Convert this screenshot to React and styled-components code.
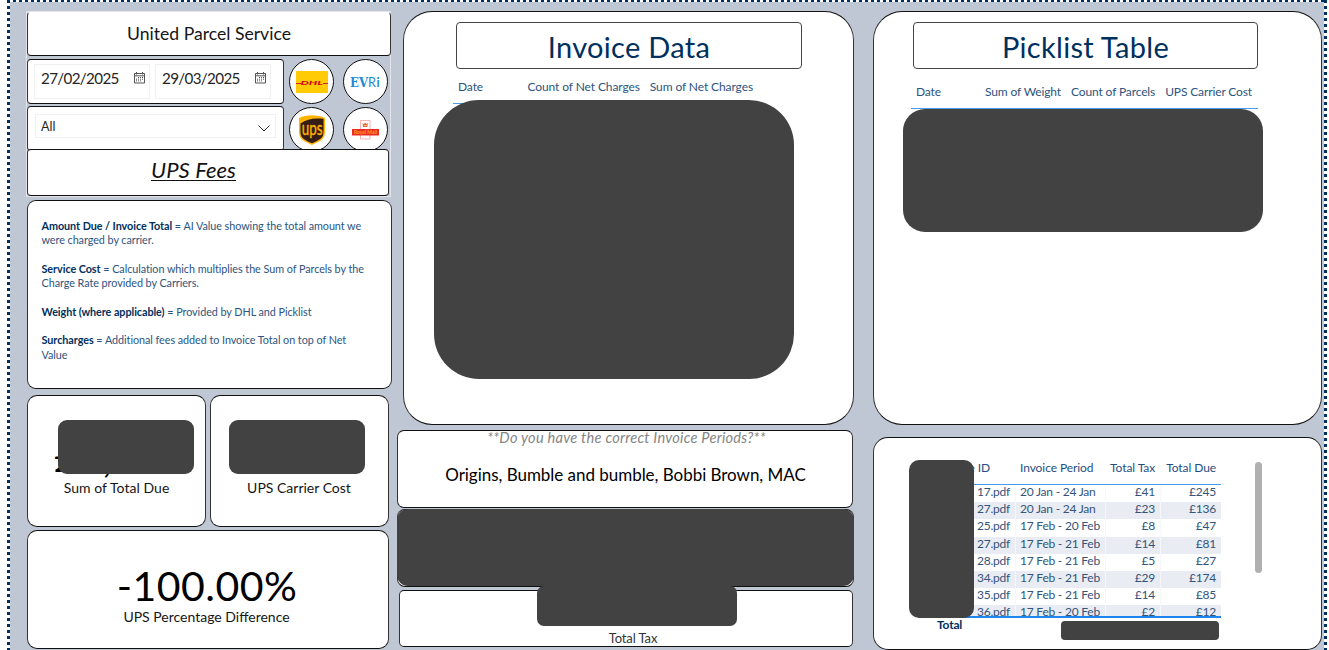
import React from "react";
import styled, { createGlobalStyle } from "styled-components";

const NAVY = "#00305e";
const COVER = "#424242";

const GlobalStyle = createGlobalStyle`
  *, *::before, *::after { box-sizing: border-box; }
  html, body { margin: 0; background: #fff; }
  body { width: 1329px; height: 650px; overflow: hidden; font-family: Lato, "Open Sans", sans-serif; color: #111; }
`;

const Board = styled.main`
  width: 1320px;
  height: 650px;
  margin-left: 7px;
  padding: 11px 0 0 19px;
  overflow: hidden;
  display: grid;
  grid-template-columns: 366px 457px 450px;
  column-gap: 5px;
  background:
    repeating-linear-gradient(180deg, ${NAVY} 0 3px, #fff 3px 6px) 0 0 / 3px 100% no-repeat,
    repeating-linear-gradient(180deg, ${NAVY} 0 3px, #fff 3px 6px) 100% 0 / 3px 100% no-repeat,
    repeating-linear-gradient(90deg, ${NAVY} 0 3px, #fff 3px 6px) 0 0 / 100% 2px no-repeat,
    #bfc6d4;
`;

const Column = styled.div`
  display: flex;
  flex-direction: column;
  align-items: flex-start;
  min-width: 0;
  margin-left: ${(p) => p.$shift || 0}px;
`;

const Card = styled.section`
  position: relative;
  flex: none;
  width: ${(p) => p.$w}px;
  height: ${(p) => p.$h}px;
  margin: ${(p) => p.$margin || "0"};
  padding-top: ${(p) => p.$top || 0}px;
  border: 1px solid #111;
  border-left-color: #333;
  border-right-color: #333;
  border-radius: ${(p) => p.$r}px;
  background: #fff;
`;

const Text = styled.div`
  font-size: ${(p) => p.$size}px;
  line-height: ${(p) => p.$lh}px;
  font-weight: ${(p) => p.$weight || 400};
  letter-spacing: ${(p) => p.$ls || 0}px;
  color: ${(p) => p.$color || "#151515"};
  padding-left: ${(p) => p.$indent || 0}px;
  padding-right: ${(p) => p.$outdent || 0}px;
  margin-top: ${(p) => p.$mt || 0}px;
  font-style: ${(p) => (p.$italic ? "italic" : "normal")};
  text-align: center;
  white-space: nowrap;
`;

const Cover = styled.div`
  position: absolute;
  left: ${(p) => p.$x}px;
  top: ${(p) => p.$y}px;
  width: ${(p) => p.$w}px;
  height: ${(p) => p.$h}px;
  border-radius: ${(p) => p.$r}px;
  background: ${COVER};
`;

/* ---- filters ---- */
const FilterFrame = styled.div`
  width: 365px;
  height: 186px;
  border: 1px solid #e3e5ea;
  display: flex;
  flex-direction: column;
`;

const TitleCard = styled(Card)`
  border-top-color: #fff;
`;

const FilterRow = styled.div`
  height: 94px;
  padding-top: 3px;
  display: flex;
`;

const Slicers = styled.div`
  display: flex;
  flex-direction: column;
  gap: 2px;
  width: 257px;
`;

const DateCard = styled(Card)`
  display: flex;
  gap: 5px;
  padding: 4px 0 0 6px;
`;

const DateField = styled.div`
  width: 116px;
  height: 35px;
  border: 1px solid #f0f0f0;
  display: flex;
  align-items: flex-start;
  justify-content: space-between;
  padding: 0 4px 0 6px;
  font-size: 15.2px;
  line-height: 27px;
  letter-spacing: -0.65px;
  color: #252423;

  svg { margin-top: 7px; }
`;

const Dropdown = styled.div`
  width: 241px;
  height: 24px;
  margin-left: 7px;
  border: 1px solid #f0f0f0;
  display: flex;
  justify-content: space-between;
  padding: 0 5px 0 5px;
  font-size: 12.5px;
  line-height: 23px;
  color: #252423;

  svg { margin-top: 10px; }
`;

const Carriers = styled.div`
  display: grid;
  grid-template-columns: 44px 44px;
  grid-template-rows: 45px 45px;
  gap: 3px 10px;
  padding-left: 5px;
`;

const CarrierButton = styled.div`
  width: 45px;
  height: 45px;
  border: 1px solid #111;
  border-radius: 50%;
  background: #fff;
  display: flex;
  align-items: center;
  justify-content: center;

  svg { overflow: visible; }
`;

const FeesHeading = styled.div`
  font-size: 22px;
  line-height: 24px;
  margin-top: 8px;
  padding-right: 29px;
  text-align: center;
  font-style: italic;
  letter-spacing: 0.1px;
  text-decoration: underline;
  text-decoration-thickness: 1px;
  text-underline-offset: 2px;
`;

/* ---- notes ---- */
const Notes = styled.div`
  padding: 0 0 0 13.5px;
  color: #2c5480;
  font-size: 10.8px;
  line-height: 14.3px;
  letter-spacing: -0.05px;
  white-space: nowrap;

  p { margin: 0 0 14.4px; }
  b { color: ${NAVY}; font-weight: 700; }
`;

const KpiRow = styled.div`
  display: flex;
  gap: 4px;
  margin: 6px 0 3px 1px;
`;

const HiddenAmount = styled.div`
  display: flex;
  gap: 24px;
  padding-left: 26px;
  height: 50px;
  font-size: 42px;
  line-height: 56px;
  color: #000;
`;

/* ---- tables ---- */
const TitleBox = styled.h2`
  margin: 10px 0 0 ${(p) => p.$x}px;
  width: ${(p) => p.$w}px;
  height: 47px;
  border: 1px solid #444;
  border-radius: 4px;
  text-align: center;
  font-weight: 400;
  font-size: 29px;
  line-height: 48px;
  letter-spacing: 0.3px;
  color: ${NAVY};
`;

const HeadRow = styled.div`
  display: flex;
  width: ${(p) => p.$w}px;
  height: 25px;
  margin: ${(p) => p.$margin};
  padding: 0 ${(p) => p.$end}px 0 5px;
  border-bottom: 1px solid #4b9be8;
  font-size: 12px;
  line-height: 16px;
  color: #2c5480;
  white-space: nowrap;
  letter-spacing: ${(p) => p.$ls || 0}px;

  span:first-child { margin-right: auto; }
  span + span { margin-left: 10px; }
`;

const InvoiceTable = styled.div`
  width: 290px;
  margin-left: 57px;
  color: #34547a;
  font-size: 12px;
`;

const Row = styled.div`
  display: grid;
  grid-template-columns: 84px 90px 55px 61px;
  height: 17.2px;
  line-height: 14px;
  letter-spacing: -0.22px;
  background: ${(p) => (p.$alt ? "#e9ecf2" : "#fff")};

  span { padding: 0 5px; white-space: nowrap; text-align: right; }
  span:nth-child(2) { text-align: left; }
  span + span { border-left: 1px solid #f6f7fa; padding-left: 4px; }
`;

const HeaderRow = styled(Row)`
  height: 27px;
  line-height: 20px;
  letter-spacing: -0.08px;
  color: #1f4e82;
  border-bottom: 1px solid #4b9be8;
  span + span { border-color: transparent; }
  span:first-child { padding-right: 25px; }
`;

const RowsClip = styled.div`
  height: 133px;
  overflow: hidden;
  border-bottom: 2px solid #1c86ee;
`;

const TotalRow = styled.div`
  padding-left: 6px;
  line-height: 14px;
  font-weight: 700;
  letter-spacing: -0.2px;
  color: ${NAVY};
`;

const ScrollThumb = styled.div`
  position: absolute;
  left: 381px;
  top: 24px;
  width: 7px;
  height: 111px;
  border-radius: 4px;
  background: #b0b0b0;
`;

const CalendarIcon = () => (
  <svg width="11" height="12" viewBox="0 0 11 12" fill="none" stroke="#555" strokeWidth="1">
    <path d="M.5 1.5h10v9.5H.5zM.5 3.8h10M2.5 0v2.5M8.5 0v2.5" />
    <path d="M4 5.5h5.5M2 7.2h7.5M2 8.9h5.5" strokeDasharray="1 1" />
  </svg>
);

const Chevron = () => (
  <svg width="12" height="7" viewBox="0 0 12 7" fill="none" stroke="#333" strokeWidth="1">
    <path d="M.5.5 6 6 11.5.5" />
  </svg>
);

const DhlLogo = () => (
  <svg width="32" height="22" viewBox="0 0 32 22">
    <path fill="#ffcb05" d="M0 0h32v22H0z" />
    <path stroke="#d81e2c" strokeWidth="1" d="M0 12.5h5M27 12.5h5" />
    <text x="4.5" y="13.6" fontSize="6.4" fontWeight="900" fontStyle="italic" fill="#d40511" textLength="22.5" lengthAdjust="spacingAndGlyphs" fontFamily="Lato">DHL</text>
  </svg>
);

const EvriLogo = () => (
  <svg width="31" height="14" viewBox="0 0 31 14" fill="#1f8ad0">
    <text x="0" y="12" fontSize="12.5" fontWeight="700" fontFamily="DejaVu Serif" textLength="18" lengthAdjust="spacingAndGlyphs">EV</text>
    <text x="18" y="12" fontSize="12.5" fontFamily="Lato" textLength="8" lengthAdjust="spacingAndGlyphs">R</text>
    <text x="26.5" y="12" fontSize="12.5" fontWeight="700" fontFamily="Lato">i</text>
  </svg>
);

const UpsLogo = () => (
  <svg width="26" height="30" viewBox="0 0 26 30">
    <path fill="#ffb500" d="M0 3C7-.8 19-.8 26 3v14c0 8-6 9.500-13 13C6 26.500 0 25 0 17z" />
    <path fill="#351c15" d="M1.500 8.500C8 3.500 16 2.800 24.500 3.800V17c0 7-5 8-11.500 11.300C6.500 25 1.500 24 1.500 17z" />
    <text x="2.8" y="19.5" fontSize="20" fill="#ffb500" stroke="#ffb500" strokeWidth=".4" fontFamily="Lato" textLength="20.8" lengthAdjust="spacingAndGlyphs">ups</text>
  </svg>
);

const RoyalMailLogo = () => (
  <svg width="27" height="20" viewBox="0 0 27 20">
    <path fill="#fff" stroke="#f4a0a0" strokeWidth=".8" d="M8.500.5h9.500v18.500H8.500z" />
    <path fill="#e2674a" d="M10.500 3l1.500 1 1.200-1.500 1.200 1.500 1.500-1-.6 4h-4.200z" />
    <path fill="#f6b44b" d="M11.500 5h3.500v1h-3.500z" />
    <path fill="#ee2a24" d="M0 9h27v6.500H0z" />
    <text x="2" y="14.2" fontSize="5.5" fontWeight="700" fill="#f9a01b" fontFamily="Lato" textLength="23" lengthAdjust="spacingAndGlyphs">Royal Mail</text>
  </svg>
);

const invoices = [
  ["17.pdf", "20 Jan - 24 Jan", "£41", "£245"],
  ["27.pdf", "20 Jan - 24 Jan", "£23", "£136"],
  ["25.pdf", "17 Feb - 20 Feb", "£8", "£47"],
  ["27.pdf", "17 Feb - 21 Feb", "£14", "£81"],
  ["28.pdf", "17 Feb - 21 Feb", "£5", "£27"],
  ["34.pdf", "17 Feb - 21 Feb", "£29", "£174"],
  ["35.pdf", "17 Feb - 21 Feb", "£14", "£85"],
  ["36.pdf", "17 Feb - 20 Feb", "£2", "£12"],
];

export default function App() {
  return (
    <>
      <GlobalStyle />
      <Board>
        <Column>
          <FilterFrame>
            <TitleCard $w={364} $h={44} $r={4} $top={9}>
              <Text $size={17.6} $lh={24}>United Parcel Service</Text>
            </TitleCard>
            <FilterRow>
              <Slicers>
                <DateCard $w={257} $h={45} $r={4}>
                  <DateField>27/02/2025<CalendarIcon /></DateField>
                  <DateField>29/03/2025<CalendarIcon /></DateField>
                </DateCard>
                <Card $w={257} $h={45} $r={4} $top={7}>
                  <Dropdown>All<Chevron /></Dropdown>
                </Card>
              </Slicers>
              <Carriers>
                <CarrierButton><DhlLogo /></CarrierButton>
                <CarrierButton><EvriLogo /></CarrierButton>
                <CarrierButton><UpsLogo /></CarrierButton>
                <CarrierButton><RoyalMailLogo /></CarrierButton>
              </Carriers>
            </FilterRow>
            <Card $w={362} $h={47} $r={4} $margin="-1px 0 0">
              <FeesHeading>UPS Fees</FeesHeading>
            </Card>
          </FilterFrame>

          <Card $w={365} $h={189} $r={9} $margin="3px 0 0 1px" $top={17.6}>
            <Notes>
              <p><b>Amount Due / Invoice Total</b> = AI Value showing the total amount we<br />were charged by carrier.</p>
              <p><b>Service Cost</b> = Calculation which multiplies the Sum of Parcels by the<br />Charge Rate provided by Carriers.</p>
              <p><b>Weight (where applicable)</b> = Provided by DHL and Picklist</p>
              <p><b>Surcharges</b> = Additional fees added to Invoice Total on top of Net<br />Value</p>
            </Notes>
          </Card>

          <KpiRow>
            <Card $w={179} $h={132} $r={10} $top={32}>
              <HiddenAmount><span>£</span><span>,</span></HiddenAmount>
              <Text $size={14} $lh={20} $ls={0.05}>Sum of Total Due</Text>
              <Cover $x={30} $y={24} $w={136} $h={54} $r={9} />
            </Card>
            <Card $w={179} $h={132} $r={10} $top={82}>
              <Text $size={14} $lh={20} $outdent={1}>UPS Carrier Cost</Text>
              <Cover $x={18} $y={24} $w={136} $h={54} $r={9} />
            </Card>
          </KpiRow>
          <Card $w={362} $h={119} $r={10} $margin="0 0 0 1px" $top={31}>
            <Text $size={41} $lh={48} $ls={0.5} $outdent={2} $color="#000">-100.00%</Text>
            <Text $size={14} $lh={20} $mt={-3} $outdent={3}>UPS Percentage Difference</Text>
          </Card>
        </Column>

        <Column>
          <Card $w={451} $h={414} $r={29} $margin="0 0 0 6px">
            <TitleBox $x={52} $w={346}>Invoice Data</TitleBox>
            <HeadRow $w={305} $end={5} $margin="10px 0 0 49px" $ls={-0.1}>
              <span>Date</span><span>Count of Net Charges</span><span>Sum of Net Charges</span>
            </HeadRow>
            <Cover $x={30} $y={88} $w={360} $h={279} $r={45} />
          </Card>
          <Card $w={456} $h={78} $r={7} $margin="5px 0 0">
            <Text $size={14.6} $lh={14} $ls={0.25} $indent={3} $color="#858585" $italic>**Do you have the correct Invoice Periods?**</Text>
            <Text $size={17} $lh={24} $mt={18} $ls={-0.03} $indent={1} $color="#000">Origins, Bumble and bumble, Bobbi Brown, MAC</Text>
          </Card>
          <Card $w={457} $h={78} $r={8} $margin="1px 0 3px">
            <Cover $x={-1} $y={-1} $w={457} $h={77} $r={11} />
          </Card>
          <Card $w={454} $h={57} $r={5} $margin="0 0 0 2px" $top={38}>
            <Text $size={13} $lh={18} $ls={-0.1} $indent={14} $color="#333">Total Tax</Text>
            <Cover $x={137} $y={-5} $w={200} $h={40} $r={7} />
          </Card>
        </Column>

        <Column $shift={14}>
          <Card $w={449} $h={414} $r={29}>
            <TitleBox $x={39} $w={345}>Picklist Table</TitleBox>
            <HeadRow $w={347} $end={6} $margin="15px 0 0 37px" $ls={-0.13}>
              <span>Date</span><span>Sum of Weight</span><span>Count of Parcels</span><span>UPS Carrier Cost</span>
            </HeadRow>
            <Cover $x={29} $y={97} $w={360} $h={123} $r={22} />
          </Card>
          <Card $w={449} $h={213} $r={15} $margin="12px 0 0" $top={20}>
            <InvoiceTable>
              <HeaderRow><span>File ID</span><span>Invoice Period</span><span>Total Tax</span><span>Total Due</span></HeaderRow>
              <RowsClip>
                {invoices.map((cells, i) => (
                  <Row key={i} $alt={i % 2 === 1}>
                    {cells.map((c, j) => <span key={j}>{c}</span>)}
                  </Row>
                ))}
              </RowsClip>
              <TotalRow>Total</TotalRow>
            </InvoiceTable>
            <Cover $x={35} $y={22} $w={65} $h={158} $r={10} />
            <Cover $x={187} $y={183} $w={158} $h={19} $r={4} />
            <ScrollThumb />
          </Card>
        </Column>
      </Board>
    </>
  );
}
